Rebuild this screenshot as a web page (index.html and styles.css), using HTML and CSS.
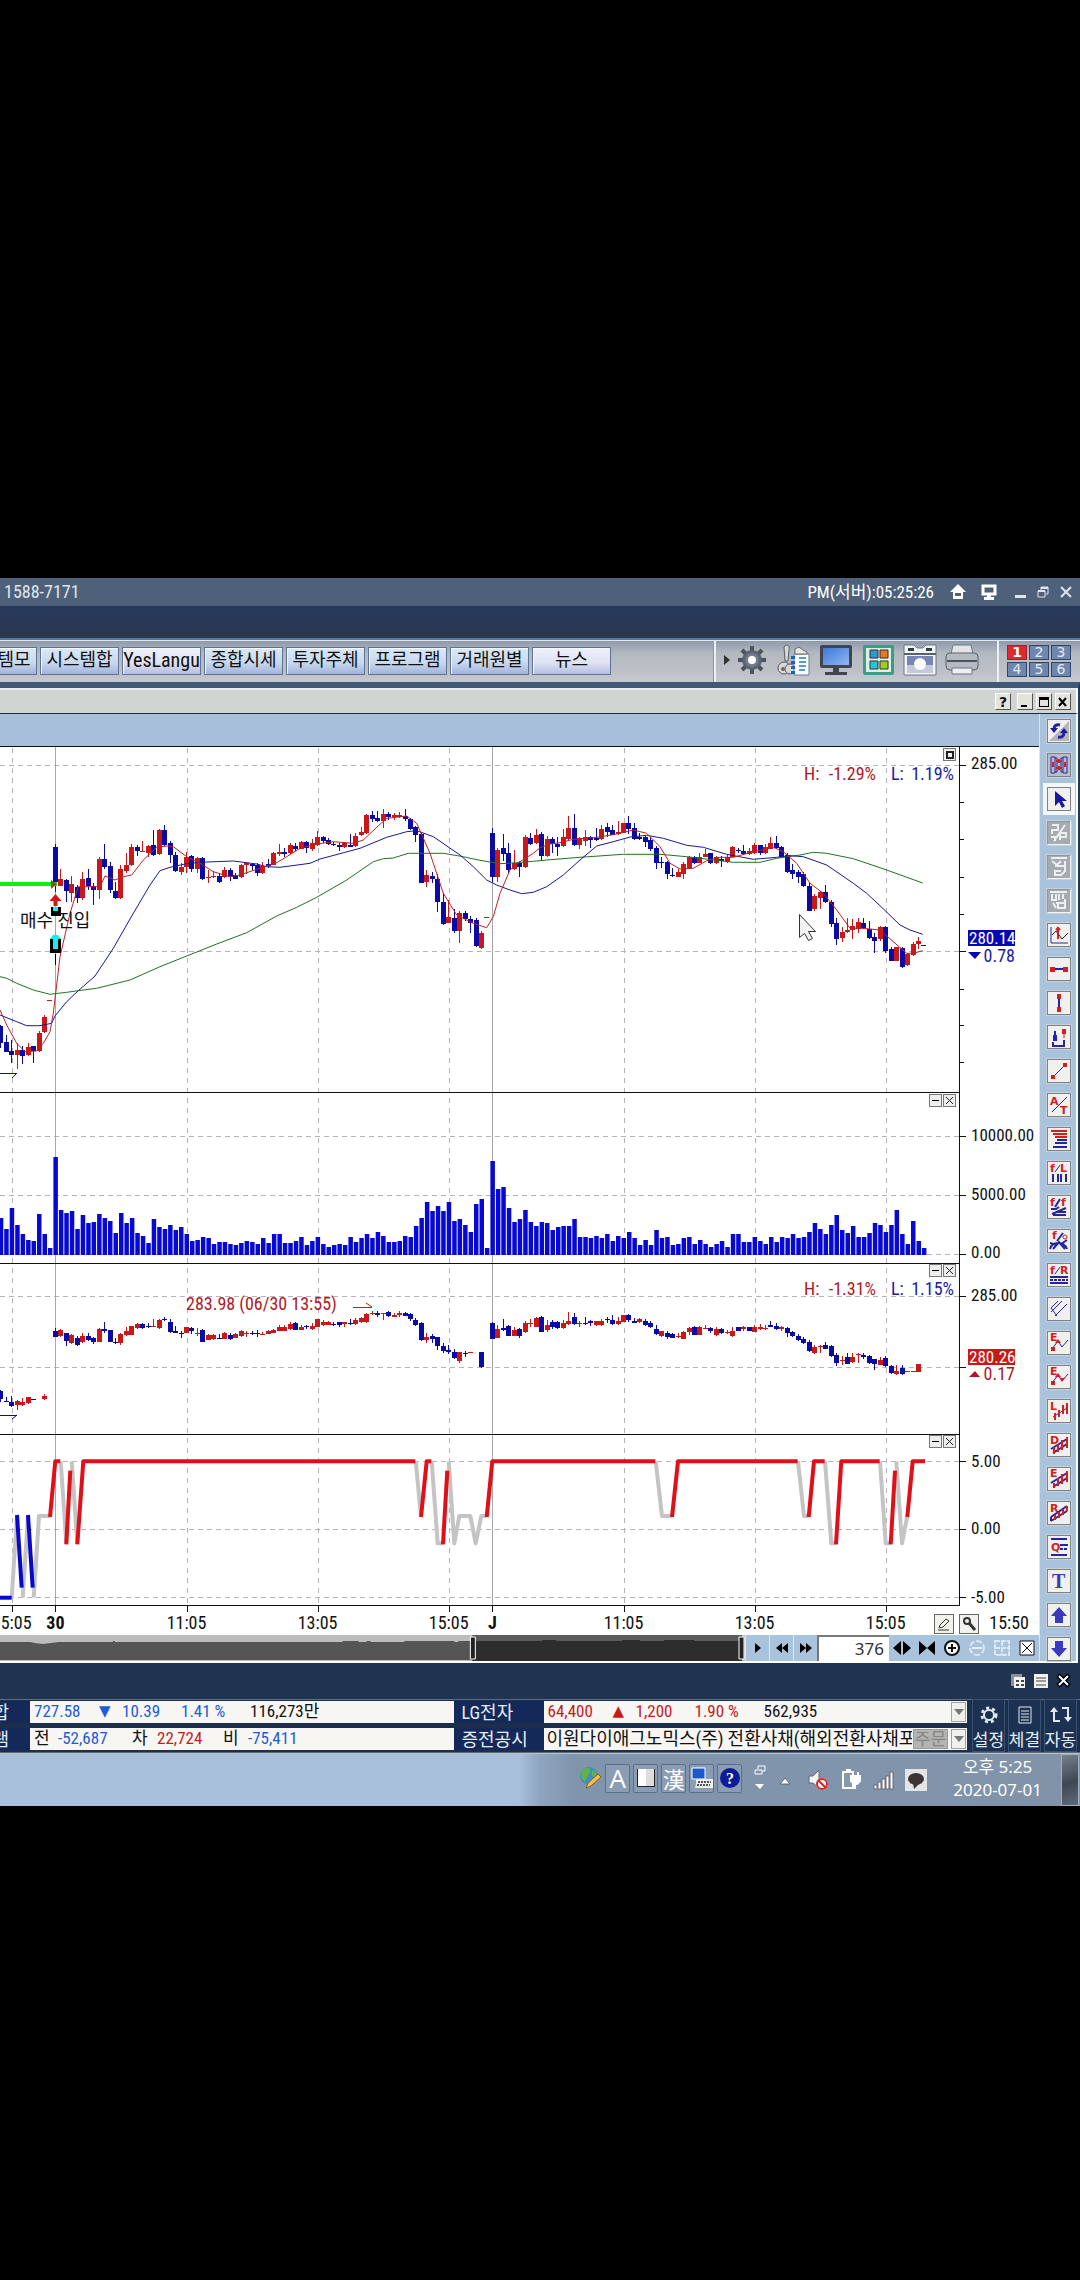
FILE: index.html
```html
<!DOCTYPE html>
<html lang="ko">
<head>
<meta charset="utf-8">
<meta name="viewport" content="width=device-width, initial-scale=1">
<title>차트</title>
<link rel="stylesheet" href="styles.css">
</head>
<body>
<div class="desktop">
  <header class="titlebar">
    <span class="phone">1588-7171</span>
    <span class="server-time">PM(서버):05:25:26</span>
    <button class="tb wide" aria-label="홈"><svg width="18" height="18" viewBox="0 0 18 18"><path d="M9 1 1 9h3v7h10V9h3z" fill="#fff"/><path d="M6 10h6v3H6z" fill="#4f617a"/></svg></button>
    <button class="tb wide" aria-label="화면"><svg width="18" height="18" viewBox="0 0 18 18"><path d="M3 3h12v8H3z" fill="none" stroke="#fff" stroke-width="3"/><path d="M7 12h4v2h3v3H4v-3h3z" fill="#fff"/></svg></button>
    <button class="tb" aria-label="최소화"><svg width="18" height="18" viewBox="0 0 18 18"><path d="M4 12h11v3H4z" fill="#dfe5ee"/></svg></button>
    <button class="tb" aria-label="복원"><svg width="18" height="18" viewBox="0 0 18 18"><path d="M4 8h7v6H4zM7 7V4h7v7h-2" fill="none" stroke="#dfe5ee" stroke-width="1"/><path d="M4 7h7v2H4zM7 4h7v2H7z" fill="#dfe5ee"/></svg></button>
    <button class="tb" aria-label="닫기"><svg width="18" height="18" viewBox="0 0 18 18"><path d="m4 4 10 10M14 4 4 14" stroke="#dfe5ee" stroke-width="2"/></svg></button>
  </header>
  <div class="menuband"></div>

  <nav class="toolbar">
    <div class="quick">
      <button>시스템모</button><button>시스템합</button><button class="latin">YesLangu</button><button>종합시세</button><button>투자주체</button><button>프로그램</button><button>거래원별</button><button class="plain">뉴스</button>
    </div>
    <div class="tools">
      <svg class="more" width="8" height="12" viewBox="0 0 8 12"><path d="m1 1 6 5-6 5z" fill="#333"/></svg>
      <button aria-label="설정"><svg width="34" height="34" viewBox="0 0 34 34"><g stroke="#4c525e" stroke-width="4"><path d="M17 3v28M3 17h28M7 7l20 20M27 7 7 27"/></g><circle cx="17" cy="17" r="10" fill="#5b6270"/><circle cx="17" cy="17" r="7" fill="#747c8c"/><circle cx="17" cy="17" r="4" fill="#fff"/></svg></button>
      <button aria-label="인증"><svg width="34" height="34" viewBox="0 0 34 34"><g fill="#d8d8d4" stroke="#555b62" stroke-width="1"><path d="M7 4c3-4 6-1 5 3l-1 11H8z"/><circle cx="7" cy="25" r="6"/><circle cx="13" cy="26" r="5"/></g><circle cx="6" cy="26" r="2" fill="#666"/><path d="M17 11h15v21H17z" fill="#f5fbff" stroke="#6b7f92"/><path d="m18 6 4-2 4 3 4 2v2H18z" fill="#e9e9e4" stroke="#666"/><path d="M22 15h7M22 19h7M22 23h7M22 27h6" stroke="#5b9bc4" stroke-width="2"/><path d="M16 13v18" stroke="#1c5fc8" stroke-width="4" stroke-dasharray="3 2"/></svg></button>
      <button aria-label="모니터"><svg width="34" height="34" viewBox="0 0 34 34"><defs><linearGradient id="scr" x2="1" y2="1"><stop offset="0" stop-color="#3f78d8"/><stop offset="1" stop-color="#8fb8f4"/></linearGradient></defs><rect x="1" y="2" width="32" height="23" rx="2" fill="#40454f"/><path d="M4 5h26v17H4z" fill="url(#scr)"/><path d="M14 25h6v4h-6zM6 29h22v3H6z" fill="#40454f"/></svg></button>
      <button aria-label="배치"><svg width="34" height="34" viewBox="0 0 34 34"><rect x="2" y="2" width="31" height="30" rx="2" fill="#3d9c86"/><path d="M5 5h25v24H5z" fill="#dfeee4"/><g stroke="#333" stroke-width="1"><path d="M9 7h8v8H9z" fill="#2f9ad0"/><path d="M19 7h8v8h-8z" fill="#e8791c"/><path d="M9 18h8v8H9z" fill="#20c8d8"/><path d="M19 18h8v8h-8z" fill="#9bd01c"/></g></svg></button>
      <button aria-label="화면 저장"><svg width="34" height="34" viewBox="0 0 34 34"><path d="M1 2h10l3 3h6l3-3h10v30H1z" fill="#f1f3f6" stroke="#6c7684"/><path d="M5 5h6v3H5zM23 5h6v3h-6z" fill="#333b48"/><path d="M1 11h32" stroke="#56606e" stroke-width="2"/><path d="M4 13h26v17H4z" fill="#7685b4"/><path d="M4 22h26v8H4z" fill="#c3cae0"/><circle cx="17" cy="21" r="6" fill="#fff"/></svg></button>
      <button aria-label="인쇄"><svg width="34" height="34" viewBox="0 0 34 34"><path d="M8 2h18l2 9H6z" fill="#e2e4e8" stroke="#6c7684"/><rect x="1" y="10" width="32" height="17" rx="4" fill="#b4b9c2" stroke="#59616e"/><path d="M2 18h30" stroke="#4c5460" stroke-width="2"/><path d="M7 25h20v6H7z" fill="#eceef2" stroke="#6c7684"/></svg></button>
    </div>
    <div class="screens">
      <button class="on">1</button><button>2</button><button>3</button><button>4</button><button>5</button><button>6</button>
    </div>
  </nav>

  <main class="window">
    <div class="window-title">
      <button aria-label="도움말">?</button>
      <button class="first" aria-label="최소화"><svg width="12" height="12"><path d="M2 9h6v2H2z"/></svg></button>
      <button aria-label="최대화"><svg width="12" height="12"><path d="M1 1h10v10H1zM2 4v6h8V4z" fill-rule="evenodd"/></svg></button>
      <button aria-label="닫기"><svg width="12" height="12"><path d="m2 2 7 8M9 2l-7 8" stroke="#000" stroke-width="2"/></svg></button>
    </div>
    <div class="workspace">
      <div class="chart-column">
        <div class="chart-header"></div>
        <div class="chart">
          <svg id="plot" viewBox="0 7 1039 888" role="img" aria-label="가격, 거래량, 지표 차트"></svg>
          <div class="pane-tools p0"><button aria-label="확대"><svg width="11" height="11"><path d="M3 3h6v6H3z" fill="none" stroke="#222" stroke-width="2"/></svg></button></div>
          <div class="pane-tools p1"><button aria-label="접기"><svg width="11" height="11"><path d="M2 5h7v1H2z"/></svg></button><button aria-label="삭제"><svg width="11" height="11"><path d="m2 2 7 7M9 2 2 9" stroke="#222"/></svg></button></div>
          <div class="pane-tools p2"><button aria-label="접기"><svg width="11" height="11"><path d="M2 5h7v1H2z"/></svg></button><button aria-label="삭제"><svg width="11" height="11"><path d="m2 2 7 7M9 2 2 9" stroke="#222"/></svg></button></div>
          <div class="pane-tools p3"><button aria-label="접기"><svg width="11" height="11"><path d="M2 5h7v1H2z"/></svg></button><button aria-label="삭제"><svg width="11" height="11"><path d="m2 2 7 7M9 2 2 9" stroke="#222"/></svg></button></div>
          <div class="axis-tools">
            <button aria-label="편집"><svg width="16" height="16" viewBox="0 0 16 16"><path d="m4 9 6-6 3 2-6 6-4 1zM2 14h11" fill="none" stroke="#333"/></svg></button>
            <button aria-label="돋보기"><svg width="16" height="16" viewBox="0 0 16 16"><circle cx="6" cy="5" r="3" fill="none" stroke="#333" stroke-width="2"/><path d="m8 7 6 7" stroke="#333" stroke-width="3"/></svg></button>
          </div>
        </div>
        <div class="range">
          <div class="overview">
            <svg preserveAspectRatio="none" viewBox="0 0 746 26"><path d="M0 0h746v26H0z" fill="#bdbdbe"/><path d="M0 7h30l5 1 8 1 16-2h54v-1h2v1h228v-1h16v1h8v-1h4v1h34v-1h50v1h4v-1h18v19H0z" fill="#555"/><path d="M473 0h270v26H473z" fill="#5c5c5d"/><path d="M473 6h70v-1h14v1h66v-1h18v1h24v-1h30v1h48v20H473z" fill="#2d2d2e"/><path d="M471 2h5v22h-5zM740 2h5v22h-5z" fill="#222" stroke="#fff"/></svg>
          </div>
          <button class="cell" aria-label="다음"><svg width="10" height="14"><path d="m2 2 6 5-6 5z"/></svg></button>
          <button class="cell" aria-label="뒤로"><svg width="14" height="14"><path d="m7 2-6 5 6 5zM13 2 7 7l6 5z"/></svg></button>
          <button class="cell" aria-label="앞으로"><svg width="14" height="14"><path d="m1 2 6 5-6 5zM7 2l6 5-6 5z"/></svg></button>
          <input class="count" aria-label="봉 개수" value="376">
          <button class="tool" aria-label="넓게"><svg width="18" height="18"><path d="M8 2v14L0 9zM10 2v14l8-7z"/></svg></button>
          <button class="tool" aria-label="좁게"><svg width="18" height="18"><path d="m1 2 8 7-8 7zM17 2 9 9l8 7z"/></svg></button>
          <button class="tool" aria-label="확대"><svg width="18" height="18"><circle cx="9" cy="9" r="7" fill="#fff" stroke="#111" stroke-width="2"/><path d="M5 9h8M9 5v8" stroke="#111" stroke-width="2"/></svg></button>
          <button class="tool" aria-label="축소"><svg width="18" height="18"><circle cx="9" cy="9" r="7" fill="none" stroke="#dce8f2" stroke-width="2" stroke-dasharray="6 2"/><path d="M4 9h10" stroke="#e8f0f6" stroke-width="2"/></svg></button>
          <button class="tool" aria-label="격자"><svg width="18" height="18"><path d="M2 2h14v14H2zM9 2v14M2 9h14" fill="none" stroke="#dce8f2" stroke-width="2" stroke-dasharray="5 1"/></svg></button>
          <button class="tool" aria-label="닫기"><svg width="18" height="18"><path d="M2 2h14v14H2z" fill="#fff" stroke="#111"/><path d="m4 4 10 10M14 4 4 14" stroke="#111"/></svg></button>
        </div>
      </div>

      <aside class="strip">
        <button aria-label="새로고침"><svg viewBox="0 0 20 20"><path d="M20 0v20H0z" fill="#b6b6ba"/><path d="M11 4C7 3 5 5 5 8M9 16c5 1 6-2 6-5" class="b w3"/><path d="M1 7h8l-4 5zM11 12h8l-4-5z" fill="#1c1c98"/></svg></button>
        <button class="sunk" aria-label="연결"><svg viewBox="0 0 20 20"><path d="M2 2h4v16H2zM14 2h4v16h-4zM6 3h2v14H6M14 3h-2v14h2" class="b"/><path d="M7 6h6M7 13h6M10 4v4M10 11v4M4 7v5M16 7v5" class="r w2"/></svg></button>
        <button class="picked" aria-label="선택"><svg viewBox="0 0 20 20"><path d="M6 2v15l4-4 3 6 3-2-3-5h5z" fill="#1818a0"/></svg></button>
        <button class="off" aria-label="도구"><svg viewBox="0 0 20 20"><path d="M3 2h6v5H3v4M16 2 5 18M11 17v-7h6v4h-6M2 14h4v4"/></svg></button>
        <button class="off" aria-label="도구"><svg viewBox="0 0 20 20"><path d="M2 1h16M3 4l5 4 4-4M6 9h10v5l-4 4H6v-4h6M16 4v8"/></svg></button>
        <button class="off" aria-label="도구"><svg viewBox="0 0 20 20"><path d="M1 1h17M3 3v6h4V3M10 3v6M14 3v5M7 12h9v5H9v-4M16 8v9M4 12l3 5"/></svg></button>
        <button aria-label="지그재그"><svg viewBox="0 0 20 20"><path d="M2 2v16h17" class="b"/><path d="m3 10 4-4 6 8 6-6" class="k"/><path d="M9 2v12M7 5l2-2 2 2" class="r w2"/></svg></button>
        <button aria-label="수평선"><svg viewBox="0 0 20 20"><path d="M4 10h12" class="b w2"/><path d="M1 8h5v5H1zM14 8h5v5h-5z" class="rf"/></svg></button>
        <button aria-label="수직선"><svg viewBox="0 0 20 20"><path d="M10 4v12" class="b w2"/><path d="M8 1h4v5H8zM8 14h4v5H8z" class="rf"/></svg></button>
        <button aria-label="구간"><svg viewBox="0 0 20 20"><path d="M4 15v4h11v-6M6 4v5" class="b w2"/><path d="M4 8h4v6H4z" fill="#2222c0"/><path d="M15 6v5" class="r"/><path d="M13 2h4v5h-4z" class="rf"/></svg></button>
        <button aria-label="추세선"><svg viewBox="0 0 20 20"><path d="M4 16 16 4" class="b"/><path d="M2 14h4v4H2zM14 2h4v4h-4z" class="rf"/></svg></button>
        <button aria-label="각도선"><svg viewBox="0 0 20 20"><path d="M3 17 18 2" class="b"/><text x="1" y="10" class="rt">A</text><text x="11" y="19" class="rt">T</text></svg></button>
        <button aria-label="분할선"><svg viewBox="0 0 20 20"><path d="M2 2h16M4 5h14M6 8h12" class="r w2"/><path d="M8 11h10M6 14h12M4 18h14" class="b w2"/></svg></button>
        <button aria-label="피보나치 시간"><svg viewBox="0 0 20 20"><text x="1" y="9" class="rt">f</text><path d="m6 9 5-7" class="b"/><text x="11" y="9" class="rt">L</text><path d="M4 11v8M9 11v8M12 11v8M17 11v8" class="b w2"/></svg></button>
        <button aria-label="피보나치 팬"><svg viewBox="0 0 20 20"><text x="1" y="9" class="rt">f</text><path d="m6 10 5-8M2 12h5l3-2M3 17l14-6M4 18h13M8 15h9" class="b w2"/><text x="12" y="9" class="rt">f</text></svg></button>
        <button aria-label="피보나치 원"><svg viewBox="0 0 20 20"><text x="3" y="8" class="rt">f</text><path d="m8 10 6-8M1 18c2-8 14-8 17 0M4 18l6-7 6 7M1 12l7 2M12 13l6-4" class="b w2"/><circle cx="16" cy="6" r="2" class="r"/></svg></button>
        <button aria-label="피보나치 되돌림"><svg viewBox="0 0 20 20"><text x="1" y="9" class="rt">f</text><path d="m6 9 5-7" class="b"/><text x="11" y="9" class="rt">R</text><path d="M1 12h18M1 18h18" class="b w2"/><path d="M1 15h18" class="b w2" stroke-dasharray="3 1"/></svg></button>
        <button aria-label="평행선"><svg viewBox="0 0 20 20"><path d="M2 9 9 2M2 13 13 2M6 17 18 5M2 9l6 8" class="b"/></svg></button>
        <button aria-label="엘리어트 1"><svg viewBox="0 0 20 20"><text x="1" y="8" class="rt">E</text><path d="m3 16 6-8 4 6 6-7" class="b"/><path d="m9 6 3 4H6zM2 14h4v4H2z" class="rf"/></svg></button>
        <button aria-label="엘리어트 2"><svg viewBox="0 0 20 20"><text x="1" y="8" class="rt">E</text><path d="m3 16 6-8 4 6 6-7" class="b"/><path d="m9 6 3 4H6zM2 14h4v4H2zM13 15l3-4h-5z" class="rf"/></svg></button>
        <button aria-label="채널 L"><svg viewBox="0 0 20 20"><text x="1" y="9" class="rt">L</text><path d="m4 16 14-9" class="b"/><path d="M6 12v7M10 9v7M14 4v9M18 2v11" class="r w2"/></svg></button>
        <button aria-label="채널 D"><svg viewBox="0 0 20 20"><text x="1" y="9" class="rt">D</text><path d="m2 14 16-10M4 18l14-9" class="b w2"/><path d="M5 12v7M9 9v8M13 5v10M18 2v11" class="r w2"/></svg></button>
        <button aria-label="채널 E"><svg viewBox="0 0 20 20"><text x="1" y="8" class="rt">E</text><path d="m2 14 16-10M4 18l14-9" class="b w2"/><path d="M5 14v5M9 9v8M13 5v10M18 2v11" class="r w2"/></svg></button>
        <button aria-label="채널 R"><svg viewBox="0 0 20 20"><text x="1" y="9" class="rt">R</text><path d="m2 14 16-11M2 18 18 8M2 18v-4" class="b w2"/><path d="M6 12v5M10 9v6M14 6v6M18 3v5" class="r w2"/></svg></button>
        <button aria-label="사분위"><svg viewBox="0 0 20 20"><path d="M2 2h16M2 18h16M11 8h8" class="b w2"/><path d="M11 12h8" class="b w2" stroke-dasharray="3 1"/><text x="2" y="14" class="rt">Q</text></svg></button>
        <button aria-label="글자"><svg viewBox="0 0 20 20"><text x="3" y="17" class="tt">T</text></svg></button>
        <button aria-label="위 화살표"><svg viewBox="0 0 20 20"><path d="m10 2 8 9h-4v7H6v-7H2z" class="bf"/></svg></button>
        <button aria-label="아래 화살표"><svg viewBox="0 0 20 20"><path d="m10 18 8-9h-4V2H6v7H2z" class="bf"/></svg></button>
      </aside>
    </div>
  </main>

  <div class="dockbar">
    <button aria-label="복사"><svg width="16" height="16"><path d="M1 1h11v12H1z" fill="#8c919a"/><path d="M4 4h11v11H4z" fill="#f2f2ee"/><path d="M6 7h3v2H6zM11 7h3v2h-3zM6 11h3v2H6zM11 11h3v2h-3z" fill="#444"/></svg></button>
    <button aria-label="목록"><svg width="16" height="16"><path d="M1 1h14v14H1z" fill="#f2f2ee"/><path d="M3 5h10M3 8h10M3 12h10" stroke="#444" stroke-width="1"/></svg></button>
    <button aria-label="닫기"><svg width="16" height="16"><path d="m2 2 11 11M13 2 2 13" stroke="#000" stroke-width="5"/><path d="m3 3 9 9M12 3l-9 9" stroke="#fff" stroke-width="2"/></svg></button>
  </div>

  <section class="ticker">
    <div class="rows">
      <div class="label cut">종합</div>
      <div class="field quote"><span class="blue">727.58</span><span class="blue mark">▼</span><span class="blue">10.39</span><span class="blue">1.41 %</span><span>116,273만</span></div>
      <div class="label">LG전자</div>
      <div class="field quote"><span class="red">64,400</span><span class="red mark">▲</span><span class="red">1,200</span><span class="red">1.90 %</span><span>562,935</span><button class="drop" aria-label="종목 선택"></button></div>
      <div class="label cut">프로그램</div>
      <div class="field flows"><span>전</span><span class="blue">-52,687</span><span>차</span><span class="red">22,724</span><span>비</span><span class="blue">-75,411</span></div>
      <div class="label">증전공시</div>
      <div class="field news"><span class="headline">이원다이애그노믹스(주) 전환사채(해외전환사채포</span><button class="order" disabled>주문</button><button class="drop" aria-label="공시 선택"></button></div>
    </div>
    <button class="dock"><svg width="18" height="18" viewBox="0 0 18 18"><circle cx="9" cy="9" r="5" fill="none" stroke="#dfeaf2" stroke-width="2"/><circle cx="9" cy="9" r="7" fill="none" stroke="#dfeaf2" stroke-width="3" stroke-dasharray="3 3"/></svg>설정</button>
    <button class="dock"><svg width="18" height="18" viewBox="0 0 18 18"><path d="M3 1h12v16H3zM5 5h8M5 8h8M5 11h8M5 14h8" fill="none" stroke="#dfeaf2"/></svg>체결</button>
    <button class="dock"><svg width="22" height="18" viewBox="0 0 22 18"><path d="M4 5v10h6M12 2h6v11" fill="none" stroke="#dfeaf2" stroke-width="2"/><path d="m4 1 4 5H0zM18 16l-4-5h8z" fill="#dfeaf2"/></svg>자동</button>
  </section>

  <footer class="taskbar">
    <div class="ime">
      <svg width="24" height="26" viewBox="0 0 24 26"><circle cx="11" cy="11" r="9" fill="#3d8fc8"/><path d="M4 5c5-4 9-2 8 2s-4 5-5 10C3 14 1 10 4 5zM14 5c4 1 6 5 5 9l-5-3z" fill="#62b04c"/><path d="m8 23 2-5 10-9 3 3-10 9z" fill="#f0c048" stroke="#8a5a20"/></svg>
      <button class="big">A</button>
      <button aria-label="반자"><svg width="20" height="22"><path d="M1 2h18v18H1z" fill="#222"/><path d="M2 2h8v17H2z" fill="#fff"/><path d="M10 2h8v17h-8z" fill="#ddd"/></svg></button>
      <button class="han">漢</button>
      <button aria-label="키보드"><svg width="22" height="22"><path d="M1 1h13v11H1z" fill="#1c58c8" stroke="#fff"/><path d="M5 13h4v2H5z" fill="#fff"/><path d="M6 12h16v9H4z" fill="#eee"/><path d="M7 15h13M6 18h13" stroke="#555" stroke-width="2" stroke-dasharray="2 1"/></svg></button>
      <button aria-label="도움말"><svg width="22" height="22"><circle cx="11" cy="11" r="10" fill="#0c1c98"/><text x="11" y="17" text-anchor="middle" class="help">?</text></svg></button>
      <svg class="stack" width="14" height="28"><path d="M2 6h7v4H2zM5 5V2h7v5H9" fill="none" stroke="#fff" stroke-width="1"/><path d="m2 20 9 0-4 5z" fill="#fff"/></svg>
    </div>
    <div class="tray">
      <svg class="hidden-icons" width="12" height="22"><path d="m1 15 5-6 5 6z" fill="#fff" stroke="#55657a"/></svg>
      <svg width="24" height="24"><path d="M3 8h4l6-6v18l-6-5H3z" fill="#f4f4f4" stroke="#667"/><circle cx="16" cy="16" r="6" fill="#fff"/><circle cx="16" cy="16" r="5" fill="none" stroke="#d22" stroke-width="2"/><path d="m12 12 8 8" stroke="#d22" stroke-width="2"/></svg>
      <svg width="24" height="24"><path d="M4 4h10v16H4zM7 2h4v2" fill="#8899aa" stroke="#fff" stroke-width="2"/><path d="M12 8h9v5l-3 3h-3l-3-3zM14 4v4M19 4v4M16 16v5" fill="#fff" stroke="#fff" stroke-width="2"/></svg>
      <svg width="24" height="22"><path d="M2 16h3v4H2zM6 13h3v7H6zM10 10h3v10h-3zM14 7h3v13h-3zM18 3h3v17h-3z" fill="#fff" stroke="#667" stroke-width="1"/></svg>
      <svg width="22" height="22"><path d="M0 0h22v22H0z" fill="#e4e4e6"/><ellipse cx="11" cy="10" rx="8" ry="6" fill="#3c3434"/><path d="m8 14 1 6 5-5z" fill="#3c3434"/></svg>
    </div>
    <div class="clock"><span>오후 5:25</span><span>2020-07-01</span></div>
    <button class="show-desktop" aria-label="바탕 화면 보기"></button>
  </footer>
</div>
<script src="chart.js"></script>
</body>
</html>
```
FILE: styles.css
```css
* { box-sizing: border-box; }
body {
  margin: 0;
  background: #000;
  color: #111;
  font: 18px/22px "Liberation Sans Narrow", "Roboto Condensed", "Noto Sans CJK KR", sans-serif;
}
button {
  margin: 0;
  padding: 0;
  border: 0;
  background: none;
  color: inherit;
  font: inherit;
}
svg { display: block; flex: none; }
.desktop { padding: 578px 0 474px; overflow: hidden; }

.titlebar {
  display: flex;
  align-items: center;
  gap: 5px;
  height: 28px;
  padding: 0 5px 0 4px;
  background: #4f617a;
  color: #dfe5ee;
}
.phone { margin-right: auto; }
.server-time { margin-right: 10px; font-size: 17px; color: #fff; }
.tb { width: 18px; height: 18px; }
.tb.wide { margin-right: 8px; }
.menuband { height: 34px; background: linear-gradient(#28395a, #2a3750); border-bottom: 2px solid #5f779a; }

.toolbar {
  display: flex;
  align-items: stretch;
  height: 42px;
  background: linear-gradient(#8f9aaa, #b4b9c0 30%, #bcc0c6 70%, #c6cad0);
  border-top: 1px solid #dfe6ee;
}
.quick {
  display: flex;
  gap: 3px;
  flex: 1;
  margin-left: -42px;
  padding-top: 6px;
  overflow: hidden;
}
.quick button {
  flex: none;
  width: 79px;
  height: 28px;
  padding-bottom: 2px;
  border: 1px solid #5d7496;
  box-shadow: inset 1px 1px #f2f8ff;
  background: linear-gradient(#dbe9f6, #c9daee 55%, #a3b3da);
  white-space: nowrap;
  overflow: hidden;
}
.quick .plain, .quick .latin { background: linear-gradient(#eef0fb, #dfe3f2 55%, #b5bedf); }
.quick .latin { font-size: 20px; }
.tools {
  display: flex;
  align-items: center;
  gap: 8px;
  width: 283px;
  padding: 0 16px 3px 7px;
  border-left: 2px solid #eef0f2;
  box-shadow: -1px 0 #8b95a2;
}
.tools button { width: 34px; height: 34px; }
.more { margin-right: -4px; }
.screens {
  display: grid;
  grid-template-columns: repeat(3, 20px);
  grid-auto-rows: 15px;
  gap: 2px;
  align-content: start;
  width: 83px;
  padding: 4px 0 0 8px;
  border-left: 2px solid #eef0f2;
}
.screens button {
  border: 1px solid #32466a;
  background: #6f86ae;
  color: #e2eaf6;
  font: 14px/13px "DejaVu Sans", sans-serif;
}
.screens .on { background: #dd2a2e; border-color: #a02030; color: #fff; font-weight: 700; }

.window {
  border-top: 6px solid #41597a;
  border-right: 2px solid #1d3a66;
}
.window-title {
  display: flex;
  align-items: center;
  justify-content: flex-end;
  gap: 3px;
  height: 26px;
  padding-right: 5px;
  background: #d0d5d1;
  border-top: 2px solid #e9ebf2;
  border-right: 2px solid #fff;
  border-bottom: 1px solid #1b2a38;
}
.window-title button {
  display: grid;
  place-items: center;
  width: 16px;
  height: 17px;
  background: #e4e4dc;
  border: 1px solid #fff;
  border-right-color: #555;
  border-bottom-color: #555;
  font: 700 14px/14px "DejaVu Sans", sans-serif;
}
.window-title .first { margin-left: 3px; }
.workspace { display: flex; border-right: 2px solid #fff; border-bottom: 2px solid #fff; }
.chart-column { flex: 1; min-width: 0; }
.chart-header { height: 33px; background: #a8bfd9; border-bottom: 1px solid #111; }
.chart { position: relative; background: #fff; }
#plot { width: 100%; height: auto; overflow: hidden; }
#plot text { font-size: 18px; fill: #111; }
#plot text.scale, #plot text.inv { font-size: 17px; }
#plot text.up { fill: #b01824; }
#plot text.down { fill: #1c1c9c; }
#plot text.inv { fill: #fff; }
#plot .bold { font-weight: 700; }
.pane-tools { position: absolute; right: 83px; display: flex; gap: 1px; }
.pane-tools button { width: 13px; height: 13px; border: 1px solid #777; background: #eee; }
.p0 { top: 1px; }
.p1 { top: 347px; }
.p2 { top: 517px; }
.p3 { top: 688px; }
.axis-tools { position: absolute; right: 60px; bottom: 1px; display: flex; gap: 5px; }
.axis-tools button { display: grid; place-items: center; width: 20px; height: 20px; border: 1px solid #666; background: #f1f1ee; }

.range { display: flex; align-items: stretch; height: 26px; background: #a9c3dc; }
.overview { flex: 1; min-width: 0; }
.overview svg { width: 100%; height: 26px; }
.cell { display: grid; place-items: center; width: 24px; border-left: 1px solid #dce8f2; }
.count {
  width: 72px;
  padding: 0 5px;
  border: 1px solid #777;
  border-width: 2px 0 0 2px;
  background: #fff;
  color: #333;
  font: 17px/22px "Noto Sans", sans-serif;
  text-align: right;
}
.tool { display: grid; place-items: center; width: 25px; }

.strip {
  display: flex;
  flex-direction: column;
  justify-content: space-between;
  align-items: center;
  width: 37px;
  padding: 5px 0 0 1px;
  border-left: 1px solid #dbe7f0;
  background: #a9c3dc;
}
.strip button {
  width: 24px;
  height: 24px;
  border: 1px solid #7d8388;
  background: #f0f0ee;
  box-shadow: 0 0 0 1px #c6d0d6;
}
.strip svg { width: 20px; height: 20px; margin: 1px; }
.strip .sunk { background: #b9bccb; }
.strip .picked { box-shadow: 0 0 0 4px #f4f6f8; }
.strip .off { background: #a4abb1; border-color: #8f989f #f2f4f4 #f2f4f4 #8f989f; }
.strip .off path { fill: none; stroke: #eef0f0; stroke-width: 2; }
.b, .r, .k { fill: none; stroke: #26269c; stroke-width: 1; }
.r { stroke: #d02020; }
.k { stroke: #222; }
.w2 { stroke-width: 2; }
.w3 { stroke-width: 3; }
.rf { fill: #d02020; }
.bf { fill: #3a3ac0; }
.rt { fill: #d02020; font: 700 11px "DejaVu Sans", sans-serif; }
.tt { fill: #3a3ab4; font: 700 20px "Liberation Serif", serif; }

.dockbar {
  display: flex;
  justify-content: flex-end;
  align-items: center;
  gap: 7px;
  height: 36px;
  padding-right: 8px;
  background: #203452;
}
.ticker {
  display: flex;
  gap: 3px;
  height: 54px;
  padding: 1px 3px 2px 0;
  background: #1b2f4c;
  border-top: 1px solid #5a6f84;
  border-bottom: 1px solid #5b6a74;
}
.rows {
  flex: 1;
  min-width: 0;
  margin-right: 2px;
  display: grid;
  grid-template-columns: 30px 1fr 90px 1fr;
  grid-template-rows: 22px 22px;
  row-gap: 5px;
}
.label {
  padding-left: 8px;
  background: #14285a;
  color: #e3eef6;
  line-height: 23px;
  white-space: nowrap;
}
.cut { display: flex; justify-content: flex-end; padding: 0 21px 0 0; }
.field { background: #f8f6f3; min-width: 0; white-space: nowrap; overflow: hidden; line-height: 21px; }
.quote { display: grid; grid-template-columns: 65px 23px 59px 69px 1fr auto; padding-left: 4px; font-size: 17px; }
.flows { display: grid; grid-template-columns: 24px 74px 25px 66px 25px 1fr; padding-left: 4px; font-size: 17px; }
.mark { font: 15px/21px "DejaVu Sans", sans-serif; }
.blue { color: #1c5cd4; }
.red { color: #c41a20; }
.news { display: flex; padding-left: 3px; }
.headline { flex: 1; min-width: 0; overflow: hidden; }
.order { width: 35px; height: 20px; margin: 1px 2px 1px 1px; background: #b4b4b2; border: 1px solid #999; color: #858585; font-size: 17px; line-height: 17px; }
.drop { width: 15px; height: 20px; margin: 1px; border: 1px solid #a2a2a0; background: #efefec; display: grid; place-items: center; }
.drop::before { content: ""; border: 5px solid transparent; border-top: 6px solid #777; border-bottom: 0; }
.dock {
  display: flex;
  flex-direction: column;
  align-items: center;
  justify-content: space-between;
  width: 33px;
  margin: -2px 0;
  padding-top: 6px;
  border: 1px solid #3a5272;
  background: #1d3152;
  color: #e3eef6;
  font-size: 17px;
  white-space: nowrap;
}

.taskbar {
  display: flex;
  align-items: center;
  height: 53px;
  padding-bottom: 4px;
  background: linear-gradient(90deg, #a8c0da 48%, #8fa5bf 50%, #8095ad 53%, #8093a9);
  border-top: 1px solid #b4c4d4;
  color: #fff;
}
.ime, .tray { display: flex; align-items: center; }
.ime { gap: 3px; margin-left: auto; }
.ime button { display: grid; place-items: center; width: 25px; height: 29px; border: 1px solid #5c6f88; border-radius: 2px; background: #8b9db4; }
.ime .big { font: 26px/26px "Open Sans", sans-serif; }
.ime .han { font: 22px/26px "Noto Sans CJK KR", sans-serif; }
.stack { margin-left: 8px; }
.help { fill: #fff; font: 700 16px "Liberation Serif", serif; }
.tray { gap: 9px; margin: 4px 26px 0 12px; }
.hidden-icons { margin-right: 6px; }
.clock { display: flex; flex-direction: column; align-items: center; font: 17px/23px "Noto Sans", "Noto Sans CJK KR", sans-serif; }
.show-desktop { width: 18px; height: 52px; margin: 4px 1px 0 19px; border: 1px solid #a5b1be; background: linear-gradient(160deg, #76818e, #3f4751 55%, #5e6b7b); }
```
FILE: chart.js
```js
// All series are stored in thirds of a pixel, relative to the top of their own pane group.
const svg = document.getElementById('plot');
const NS = 'http://www.w3.org/2000/svg';
const RED = '#c81818', BLUE = '#0a0aa4';
const barX = i => 55.4 + 5.4625 * (i);

function add(tag, attrs, text) {
  const el = document.createElementNS(NS, tag);
  for (const k in attrs) el.setAttribute(k, attrs[k]);
  if (text) el.textContent = text;
  svg.appendChild(el);
  return el;
}
const line = (x1, y1, x2, y2, stroke, dash) =>
  add('path', { d: `M${x1} ${y1}L${x2} ${y2}`, stroke, fill: 'none', ...(dash ? { 'stroke-dasharray': dash } : {}) });
const poly = (pts, top, stroke, w) =>
  add('polyline', {
    points: pts.split(' ').map(p => { const [x, y] = p.split(','); return (x / 3).toFixed(1) + ',' + (top + y / 3).toFixed(1); }).join(' '),
    fill: 'none', stroke, 'stroke-width': w, 'stroke-linejoin': 'round'
  });
const label = (x, mid, text, cls, anchor) =>
  add('text', { x, y: mid + 6, class: cls || '', 'text-anchor': anchor || 'start' }, text);

// high top bottom low colour; "-" leaves a slot empty
function candles(data, top) {
  const paths = { r: '', b: '' };
  data.trim().split(/\s*\|\s*/).forEach((c, n) => {
    if (c === '-') return;
    const [h, t, b, l, col] = c.split(' ');
    const x = Math.round(barX(n - 10) - 0.5), y = v => Math.round(top + v / 3);
    paths[col] += `M${x} ${y(h)}h1V${y(l)}h-1zM${x - 2} ${y(t)}h5V${Math.max(y(b), y(t) + 1)}h-5z`;
  });
  add('path', { d: paths.b, fill: BLUE });
  add('path', { d: paths.r, fill: RED });
}

// grid
const GRID = '#b9b0bd';
[-8, 24, 48, 72, 104, 128, 152].forEach(i => {
  const x = Math.round(barX(i)) + 0.5;
  line(x, 8, x, 865, GRID, '5 5');
  line(x, 866, x, 872, '#111');
});
[25.5, 211.5, 396.5, 455.5, 514.5, 556.5, 627.5, 721.5, 789.5, 857.5].forEach(y => line(0, y, 959, y, GRID, '5 4'));
[0, 80].forEach(i => {
  const x = Math.round(barX(i)) + 0.5;
  line(x, 7, x, 865, '#a8a8ac');
  line(x, 866, x, 872, '#111');
});
[352.5, 523.5, 694.5, 865.5].forEach(y => line(0, y, 959, y, '#111'));
line(959.5, 7, 959.5, 866, '#111');
[62, 99, 137, 174, 249, 285, 322].forEach(y => line(959, y + 0.5, 964, y + 0.5, '#111'));
[25, 211, 396, 455, 514, 556, 627, 721, 789, 857].forEach(y => line(959, y + 0.5, 966, y + 0.5, '#111'));

// price
candles(`855 858 908 925 b|885 906 937 937 b|900 934 944 970 b|910 931 944 987 r|917 931 948 972 b|910 920 946 948 r|917 918 933 970 b|872 880 933 935 r|824 831 876 880 r|779 779 781 781 r
|312 320 425 455 b|387 418 437 437 r|418 420 453 485 b|408 431 458 487 r|435 440 475 490 b|395 418 475 480 r|387 415 437 450 b|430 437 450 495 b|350 357 450 478 r|312 357 380 387 b
|367 377 450 458 b|425 452 475 478 b|375 387 475 478 r|340 374 392 398 r|312 320 375 377 r|316 321 334 348 b|303 332 334 335 r|316 318 338 350 r|270 316 346 348 b|268 271 343 345 r
|255 270 316 318 b|302 308 345 370 b|335 345 392 395 b|370 382 396 405 r|337 350 382 398 r|345 348 388 395 b|350 355 388 398 r|350 355 418 420 b|390 410 415 430 r|392 407 412 414 r
|400 408 425 430 b|382 390 412 414 r|384 390 410 422 b|398 405 417 418 b|372 374 412 414 r|366 370 375 402 r|368 372 377 390 b|370 375 400 408 b|365 378 400 403 r|357 372 378 385 b
|337 340 374 376 r|312 337 342 347 r|325 337 342 350 b|308 316 340 342 r|310 318 326 333 b|303 307 326 328 r|303 307 325 340 b|297 308 328 332 r|273 292 314 318 r|287 291 302 308 b
|295 300 312 314 b|306 312 316 318 b|308 314 322 332 b|305 308 322 324 r|283 314 320 322 b|278 288 318 320 r|260 276 286 288 r|223 226 280 283 r|214 226 236 245 b|214 234 244 246 b
|208 222 242 265 r|216 222 232 240 b|218 226 230 240 r|216 226 230 234 r|208 228 236 243 b|234 238 268 270 b|257 262 285 307 b|278 283 428 430 b|390 405 425 442 r|395 408 418 430 b
|402 418 486 515 b|460 485 552 554 b|480 530 548 550 r|508 533 573 580 b|514 518 573 610 r|514 518 538 542 b|528 538 548 580 b|533 540 618 620 b|572 580 623 627 r|530 530 532 532 r
|263 280 412 425 b|325 330 412 425 r|283 323 343 363 b|308 340 390 400 b|330 368 387 389 r|362 368 380 410 b|285 292 380 384 r|280 294 312 315 b|268 284 308 312 r|275 283 347 362 b
|288 296 348 352 r|292 298 312 340 b|290 313 320 348 b|268 292 318 320 r|228 263 296 300 r|222 264 315 318 b|292 295 315 328 r|270 292 303 318 r|288 292 300 323 b|263 294 300 302 b
|255 266 298 300 r|250 262 275 290 b|255 270 284 286 b|243 276 282 284 r|248 250 278 280 r|228 250 268 282 b|250 264 296 300 b|278 290 296 300 b|288 290 307 322 b|292 300 328 333 b
|318 323 368 388 b|352 365 369 385 b|363 366 402 418 b|385 404 409 410 b|388 397 410 412 r|365 373 402 416 r|347 350 385 388 r|348 350 370 373 b|340 350 368 370 r|328 342 350 352 r
|338 340 368 372 b|348 352 370 373 r|348 358 363 380 b|345 350 366 368 r|318 322 350 352 r|325 329 332 340 b|315 333 342 346 b|323 333 342 345 r|308 315 340 342 r|314 316 338 344 b
|312 320 338 342 r|290 308 326 328 r|287 308 325 327 b|318 322 350 352 b|338 345 395 398 b|372 390 402 418 b|390 396 410 430 b|395 402 438 442 b|430 438 512 512 b|462 468 508 512 r
|452 457 475 508 r|435 457 486 488 b|480 485 552 560 b|533 550 598 615 b|562 577 594 606 r|533 570 577 580 r|538 557 570 598 r|533 545 567 578 r|533 550 565 567 b|543 568 595 598 b
|580 592 602 640 b|558 562 598 602 r|558 562 632 638 b|620 628 662 664 b|620 622 662 664 r|620 625 680 684 b|640 643 675 677 r|605 611 645 648 r|590 602 613 627 r|615 616 618 618 b`, 0);
poly('0,710 20,715 50,730 100,750 150,763 200,757 235,752 290,745 390,720 480,680 560,648 650,612 740,578 830,528 890,502 950,472 1040,420 1120,365 1150,356 1180,354 1225,340 1330,340 1390,350 1440,361 1500,371 1550,368 1600,364 1640,360 1740,352 1870,343 1980,343 2060,350 2150,361 2200,367 2280,367 2330,355 2400,345 2440,337 2480,340 2560,356 2660,390 2768,429', 0, '#1f741f', 1);
poly('0,825 50,845 80,857 120,857 155,850 165,828 200,785 235,752 285,708 340,625 400,520 450,435 480,392 510,382 560,371 600,367 700,363 770,372 800,380 840,382 930,370 960,357 1080,325 1160,292 1220,275 1250,272 1300,290 1380,345 1420,380 1460,420 1490,435 1530,450 1565,461 1600,457 1640,440 1690,405 1740,360 1790,318 1840,305 1890,291 1940,286 1990,295 2060,316 2110,322 2180,343 2260,358 2330,352 2370,347 2410,350 2480,375 2560,430 2600,460 2640,497 2700,555 2730,570 2768,583', 0, '#18189c', 1);
poly('0,810 20,855 50,910 75,935 110,933 130,910 150,875 160,820 180,650 210,520 235,440 300,440 315,408 345,420 370,410 395,405 430,360 470,322 500,318 520,320 560,350 600,370 640,395 690,410 720,405 770,388 830,368 860,350 900,325 950,312 1000,305 1060,310 1090,300 1130,262 1160,235 1220,228 1250,250 1290,340 1330,460 1370,525 1420,550 1460,563 1480,530 1500,460 1530,390 1560,365 1600,340 1620,323 1650,312 1680,308 1720,298 1790,292 1840,284 1900,270 1940,280 1980,320 2010,370 2040,387 2080,385 2120,362 2160,352 2200,352 2260,335 2320,322 2350,335 2390,370 2430,430 2470,460 2510,510 2550,565 2590,565 2640,570 2680,605 2720,640 2740,640 2768,632', 0, '#c02028', 1);

// entry signal
add('path', { d: 'M0 142h57v4H0z', fill: '#10f010' });
add('path', { d: 'M51 140l6 4-6 5z', fill: '#7a5a10' });
add('path', { d: 'M55.500 154l6 7h-4v5h-4v-5h-4z', fill: '#d01818' });
add('path', { d: 'M51 167h10v9H51zM50 199h11v14H50zM55 214h1v11h-1z', fill: '#000' });
add('path', { d: 'M53 167h5v4h-5zM53 195h5l3 4h-3v10h-5v-10h-3z', fill: '#20e8f0' });
label(20, 181, '매수 진입');
line(0, 333.5, 17, 333.5, BLUE);
line(17, 333, 12, 338, BLUE);

// volume
const volume = [384,417,355,404,433,450,454,372,433,474,200,360,368,364,417,376,400,396,372,384,392,429,368,400,384,429,437,458,388,412,416,404,421,412,433,454,450,441,445,461,457,457,461,465,458,454,457,461,445,458,433,433,458,458,454,441,465,454,441,461,470,466,461,465,441,457,445,433,445,425,437,457,457,454,437,441,408,384,335,363,347,363,335,392,388,404,425,343,326,474,212,298,290,355,396,388,359,396,408,396,400,421,412,408,408,388,441,441,445,437,445,433,454,437,445,425,445,465,449,465,421,445,441,465,461,445,441,461,449,461,470,461,454,470,433,433,457,457,441,454,461,441,457,441,445,433,445,441,425,400,417,433,404,376,421,429,408,441,441,429,400,404,425,404,359,433,461,392,454,474];
add('path', {
  d: volume.map((v, n) => `M${(barX(n - 10) - 2).toFixed(1)} 515V${Math.round(350 + v / 3)}h4.5V515z`).join(''),
  fill: '#0808d4'
});

// index
candles(`900 902 928 935 b|920 932 935 937 b|917 937 948 950 b|930 933 944 960 r|925 937 944 948 r|920 922 940 942 r|926 926 928 928 b|-|912 917 927 930 r|-
|715 724 740 742 b|717 720 738 740 r|728 729 752 768 b|733 736 759 762 r|738 744 764 768 b|730 737 756 760 r|728 738 751 753 b|740 745 756 763 b|715 717 755 757 r|696 718 722 728 b
|720 721 755 757 b|745 756 760 761 b|728 732 760 764 r|712 724 735 737 r|707 708 735 736 r|700 703 713 716 r|700 702 714 716 b|700 707 711 714 b|687 708 711 712 r|688 690 715 718 r
|680 686 690 694 b|688 697 727 728 b|708 724 728 730 b|722 729 732 744 b|710 711 728 730 r|712 713 723 731 b|715 729 732 738 r|717 720 755 757 b|733 736 749 751 r|733 736 748 750 r
|733 744 747 748 b|725 729 747 748 r|728 736 747 749 b|729 731 743 744 r|720 724 738 741 r|722 728 732 740 r|722 728 732 736 b|720 729 732 740 b|725 732 735 736 r|720 723 731 732 r
|716 720 728 730 r|706 710 723 724 r|705 710 722 724 r|696 702 716 720 r|695 699 719 720 b|704 712 719 720 r|705 708 712 718 b|700 708 718 720 r|687 688 710 712 r|690 696 704 708 r
|692 696 704 706 r|696 702 706 708 b|695 697 706 712 b|695 697 701 710 r|688 699 702 704 b|685 690 702 704 r|682 684 697 699 r|668 671 696 698 r|662 668 673 674 r|664 670 674 680 b
|668 668 673 690 r|664 667 678 680 b|670 675 681 682 r|664 668 674 680 r|666 668 678 679 b|668 673 686 692 b|685 690 706 708 b|695 700 751 752 b|728 740 751 758 r|733 737 746 760 b
|740 741 768 780 b|760 768 784 788 b|765 781 785 793 b|778 786 804 806 b|786 787 812 820 r|782 789 793 800 b|786 786 788 788 r|-|785 786 832 833 b|-
|695 700 747 748 b|705 718 743 744 r|687 715 720 722 b|704 708 737 739 b|710 721 737 738 r|715 716 737 744 b|692 698 727 730 r|688 698 702 710 r|682 684 710 712 r|678 680 725 727 b
|690 704 720 726 r|690 697 712 716 b|692 696 714 718 b|690 698 713 716 r|667 692 703 704 r|670 680 703 706 b|694 698 702 710 r|680 698 702 706 b|690 694 698 708 b|692 694 706 708 r
|688 694 706 708 r|680 686 690 698 b|676 690 702 704 b|680 694 703 704 r|674 676 695 697 r|672 674 690 696 b|684 694 698 699 b|684 687 697 699 r|686 694 706 708 b|694 698 712 714 b
|704 716 733 736 b|722 724 738 740 r|724 728 740 748 b|728 731 743 744 b|728 738 742 744 r|722 725 746 748 r|712 714 726 736 r|708 711 735 736 b|709 711 735 736 r|706 713 717 718 r
|712 715 724 730 b|710 718 735 737 r|714 717 730 732 b|720 726 730 732 r|710 722 738 740 r|710 712 722 724 b|708 712 716 722 r|710 712 722 724 b|705 711 725 727 r|702 712 716 720 r
|704 714 718 720 r|692 706 710 712 b|698 708 718 720 b|708 712 716 722 r|710 714 730 740 b|722 726 738 742 b|732 738 750 753 b|740 748 759 761 b|750 757 783 785 b|764 772 790 792 r
|765 767 771 788 r|756 765 776 778 b|765 769 797 800 b|788 794 818 828 b|797 810 814 824 r|788 801 821 823 b|788 800 816 818 r|788 792 796 818 r|788 796 800 808 b|794 797 820 822 b
|806 808 822 840 b|802 810 824 826 r|798 805 828 830 b|824 828 850 852 b|826 843 853 854 r|826 835 853 854 b|843 843 845 845 r|843 843 845 845 r|822 823 846 847 r`, 350);
label(186, 564, '283.98 (06/30 13:55)', 'up');
line(353, 567.5, 372, 567.5, RED);
line(366, 563, 372, 567, RED);
line(0, 675.5, 17, 675.5, BLUE);
line(17, 675, 12, 679, BLUE);

// oscillator
['35,503 51,258', '68,503 84,258', '101,503 117,258 150,258', '182,94 199,340', '215,94 232,340', '1247,94 1263,258', '1295,94 1313,340 1329,340',
  '1346,94 1363,340 1378,258 1411,258 1427,340 1444,258 1460,258', '1967,94 1986,258 2016,258', '2394,94 2412,258 2426,258', '2475,94 2494,340 2508,340',
  '2640,94 2657,340 2672,340', '2689,94 2706,340 2722,258'].forEach(p => poly(p, 690, '#c4c4c4', 4));
['0,503 35,503', '51,255 65,473', '84,255 98,473'].forEach(p => poly(p, 690, '#0808cc', 4));
['150,261 166,94 181,94', '199,343 211,122', '232,343 250,94 1246,94', '1263,261 1280,94 1294,94', '1329,343 1342,122', '1460,261 1477,94 1966,94',
  '2016,261 2034,94 2393,94', '2426,261 2442,94 2474,94', '2508,343 2524,94 2639,94', '2672,343 2685,122', '2722,261 2738,94 2775,94'].forEach(p => poly(p, 690, '#e01018', 4));

// scales
[[23, '285.00'], [395, '10000.00'], [454, '5000.00'], [512, '0.00'], [555, '285.00'], [721, '5.00'], [788, '0.00'], [857, '-5.00']].forEach(([y, t]) => label(971, y, t, 'scale'));
add('rect', { x: 968, y: 190, width: 47, height: 16, fill: '#0808b0' });
label(969, 198, '280.14', 'inv');
label(1015, 216, '0.78', 'down', 'end');
add('path', { d: 'M968 212h13l-6 7z', fill: '#0808b0' });
add('rect', { x: 968, y: 609, width: 47, height: 16, fill: '#c81818' });
label(969, 617, '280.26', 'inv');
label(1015, 634, '0.17', 'up', 'end');
add('path', { d: 'M969 637h11l-5-6z', fill: '#b01824' });
[[34, '-1.29%', '1.19%'], [549, '-1.31%', '1.15%']].forEach(([y, h, l]) => {
  label(804, y, 'H:', 'up');
  label(876, y, h, 'up', 'end');
  label(891, y, 'L:', 'down');
  label(954, y, l, 'down', 'end');
});
[[-8, '15:05'], [24, '11:05'], [48, '13:05'], [72, '15:05'], [104, '11:05'], [128, '13:05'], [152, '15:05']].forEach(([i, t]) => label(barX(i), 883, t, '', 'middle'));
label(barX(0), 883, '30', 'bold', 'middle');
label(barX(80), 883, 'J', 'bold', 'middle');
label(1029, 883, '15:50', '', 'end');

// pointer
add('path', { d: 'M799.500 174.500v23l5-4 4 7 4-2-4-7h7z', fill: '#f4f4f4', stroke: '#333' });
```
